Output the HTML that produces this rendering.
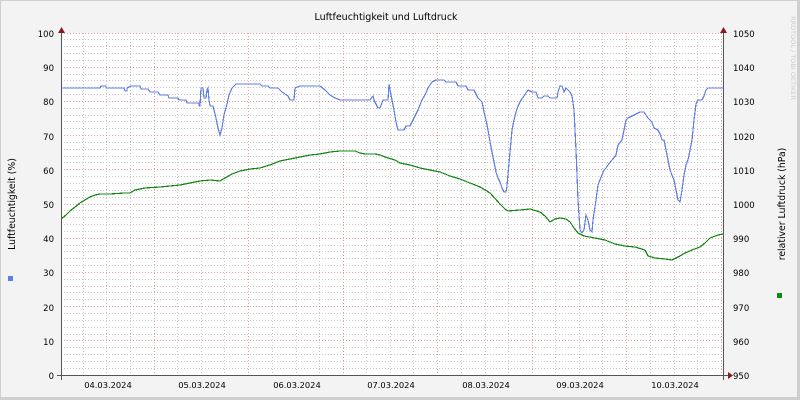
<!DOCTYPE html>
<html><head><meta charset="utf-8"><style>
html,body{margin:0;padding:0;background:#f3f3f3}
svg{display:block}
text{font-family:"DejaVu Sans","Liberation Sans",sans-serif;fill:#000}
</style></head><body>
<svg width="800" height="400" xmlns="http://www.w3.org/2000/svg">
<rect x="0" y="0" width="800" height="400" fill="#f3f3f3"/>
<rect x="0.5" y="0.5" width="799" height="399" fill="none" stroke="#cfcfcf"/>
<rect x="797" y="0" width="3" height="400" fill="#cfcfcf"/>
<rect x="0" y="397" width="800" height="3" fill="#cfcfcf"/>
<rect x="61" y="33" width="662" height="342" fill="#ffffff"/>
<g stroke="#c8c8c8" stroke-width="1" stroke-dasharray="1,2" fill="none" shape-rendering="crispEdges">
<path d="M61 368.5H723M61 361.5H723M61 354.5H723M61 347.5H723M61 334.5H723M61 327.5H723M61 320.5H723M61 313.5H723M61 299.5H723M61 292.5H723M61 286.5H723M61 279.5H723M61 265.5H723M61 258.5H723M61 251.5H723M61 245.5H723M61 231.5H723M61 224.5H723M61 217.5H723M61 210.5H723M61 197.5H723M61 190.5H723M61 183.5H723M61 176.5H723M61 162.5H723M61 156.5H723M61 149.5H723M61 142.5H723M61 128.5H723M61 121.5H723M61 115.5H723M61 108.5H723M61 94.5H723M61 87.5H723M61 80.5H723M61 74.5H723M61 60.5H723M61 53.5H723M61 46.5H723M61 39.5H723"/>
<path d="M83.5 33V375M106.5 33V375M130.5 33V375M177.5 33V375M201.5 33V375M224.5 33V375M272.5 33V375M296.5 33V375M319.5 33V375M366.5 33V375M390.5 33V375M413.5 33V375M461.5 33V375M485.5 33V375M508.5 33V375M555.5 33V375M579.5 33V375M602.5 33V375M650.5 33V375M674.5 33V375M697.5 33V375"/>
</g>
<g stroke="#e4a0a0" stroke-width="1" stroke-dasharray="1,2" fill="none" shape-rendering="crispEdges">
<path d="M61 340.5H723M61 306.5H723M61 272.5H723M61 238.5H723M61 204.5H723M61 169.5H723M61 135.5H723M61 101.5H723M61 67.5H723M61 33.5H723"/>
<path d="M154.5 33V375M248.5 33V375M343.5 33V375M437.5 33V375M532.5 33V375M626.5 33V375M721.5 33V375"/>
</g>
<polyline fill="none" stroke="#5f7fe6" stroke-width="1.2" shape-rendering="crispEdges" points="61,88 100,88 101,86 106,86 106,88 124,88 125,91 127,91 127,88 131,86 140,86 141,89 148,89 150,92 158,92 160,95 168,95 169,98 178,98 179,100 186,100 187,103 199,103 199,106 200,106 201,88 203,88 204,98 206,98 207,90 208,88 209,100 210,106 213,106 214,110 216,118 218,128 220,135 222,128 224,115 227,104 229,95 232,88 234,86 236,84 260,84 262,86 268,86 270,88 278,88 282,92 288,96 290,100 294,100 295,88 300,86 320,86 325,90 330,95 335,98 340,100 370,100 373,96 374,100 378,108 380,108 383,100 388,100 389,84 390,90 392,100 394,110 396,122 398,130 404,130 406,126 410,126 414,118 418,110 422,100 425,95 428,88 432,82 436,80 444,80 446,82 456,82 458,86 466,86 468,90 474,90 478,98 482,102 484,112 486,120 488,130 490,142 492,152 494,162 496,172 498,178 500,182 502,188 504,192 506,192 507,186 508,174 510,152 512,130 514,120 516,112 518,106 521,100 524,96 528,90 532,92 536,92 538,98 542,98 544,96 548,96 550,98 557,98 558,92 560,86 562,86 564,92 566,88 570,92 572,96 574,110 576,150 578,200 580,230 582,233 584,230 586,215 588,220 590,230 592,232 593,220 596,200 598,185 600,180 602,175 604,170 606,168 608,165 612,160 616,155 618,145 622,140 624,130 626,120 628,118 632,116 640,112 644,112 648,118 652,122 654,128 658,130 660,134 662,140 664,140 666,150 668,160 670,170 672,175 674,180 676,190 678,200 680,202 682,190 684,175 686,165 688,160 690,150 692,140 694,120 696,104 698,100 702,100 704,96 706,90 708,88 723,88"/>
<polyline fill="none" stroke="#118811" stroke-width="1.2" shape-rendering="crispEdges" points="61,219 66,215 70,211 75,207 80,203 85,200 90,197 95,195 100,194 110,194 125,193 130,193 135,190 145,188 160,187 170,186 180,185 190,183 200,181 210,180 220,181 225,178 232,174 240,171 250,169 260,168 270,165 280,161 290,159 300,157 310,155 320,154 330,152 340,151 355,151 360,153 365,154 375,154 380,155 385,157 395,160 400,163 410,165 420,168 430,170 440,172 450,176 460,179 470,183 480,187 490,193 500,204 505,209 508,211 520,210 530,209 540,212 545,216 550,222 555,219 560,218 566,219 570,222 574,228 578,233 584,236 595,238 605,240 615,244 625,246 635,247 645,250 648,256 655,258 665,259 672,260 680,256 685,253 692,250 700,247 705,243 710,238 718,235 723,234"/>
<line x1="61.5" y1="33" x2="61.5" y2="380" stroke="#555" shape-rendering="crispEdges"/>
<line x1="723.5" y1="33" x2="723.5" y2="380" stroke="#555" shape-rendering="crispEdges"/>
<line x1="57" y1="375.5" x2="728" y2="375.5" stroke="#555" shape-rendering="crispEdges"/>
<polygon points="58,33 65,33 61.5,27" fill="#8b1a1a"/>
<polygon points="720,33 727,33 723.5,27" fill="#8b1a1a"/>
<polygon points="728,372 728,379 733,375.5" fill="#8b1a1a"/>
<text x="386" y="20" font-size="9.5" text-anchor="middle">Luftfeuchtigkeit und Luftdruck</text>
<g font-size="8.5" text-anchor="end">
<text x="54" y="37">100</text><text x="54" y="71">90</text><text x="54" y="105">80</text><text x="54" y="140">70</text><text x="54" y="174">60</text><text x="54" y="208">50</text><text x="54" y="242">40</text><text x="54" y="276">30</text><text x="54" y="311">20</text><text x="54" y="345">10</text><text x="54" y="379">0</text>
</g>
<g font-size="8.5">
<text x="733" y="37">1050</text><text x="733" y="71">1040</text><text x="733" y="105">1030</text><text x="733" y="140">1020</text><text x="733" y="174">1010</text><text x="733" y="208">1000</text><text x="733" y="242">990</text><text x="733" y="276">980</text><text x="733" y="311">970</text><text x="733" y="345">960</text><text x="733" y="379">950</text>
</g>
<g font-size="8.3" text-anchor="middle">
<text x="108" y="388">04.03.2024</text><text x="202" y="388">05.03.2024</text><text x="297" y="388">06.03.2024</text><text x="391" y="388">07.03.2024</text><text x="486" y="388">08.03.2024</text><text x="580" y="388">09.03.2024</text><text x="675" y="388">10.03.2024</text>
</g>
<text font-size="9.3" text-anchor="middle" transform="translate(15,204) rotate(-90)">Luftfeuchtigkeit (%)</text>
<text font-size="9.3" text-anchor="middle" transform="translate(785,204) rotate(-90)">relativer Luftdruck (hPa)</text>
<text font-size="6.5" text-anchor="middle" transform="translate(791,58) rotate(90)" style="fill:#cccccc">RRDTOOL / TOBI OETIKER</text>
<rect x="8" y="276" width="5" height="5" fill="#5f7fe6"/>
<rect x="777" y="293" width="5" height="5" fill="#118811"/>
</svg>
</body></html>
